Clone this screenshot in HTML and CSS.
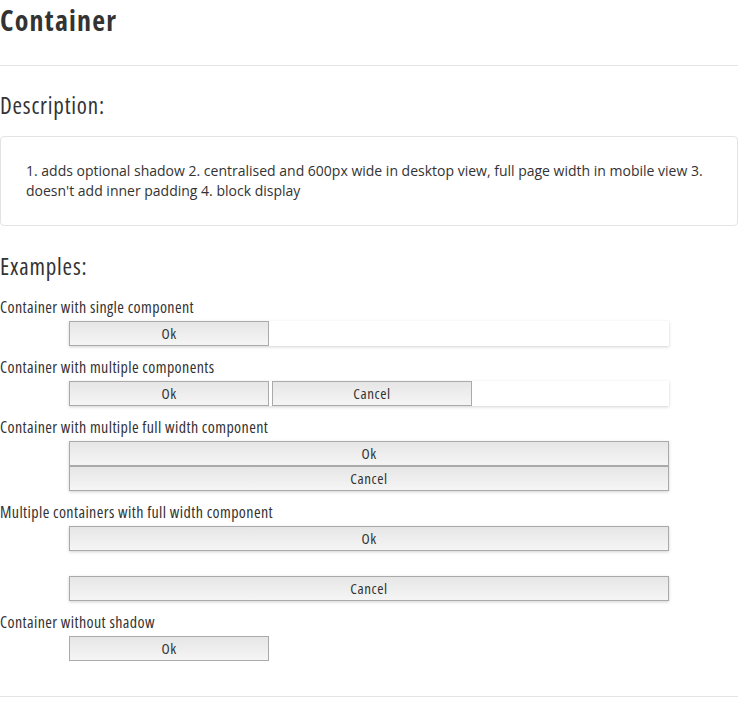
FILE: index.html
```html
<!DOCTYPE html>
<html lang="en">
<head>
<meta charset="utf-8">
<title>Container</title>
<link rel="stylesheet" href="styles.css">
</head>
<body>
<main class="page">
  <header class="page-head">
    <h1 class="page-title">Container</h1>
  </header>

  <section class="section">
    <h2 class="section-title">Description:</h2>
    <div class="desc-box">
      <p class="desc-text">1. adds optional shadow 2. centralised and 600px wide in desktop view, full page width in mobile view 3. doesn't add inner padding 4. block display</p>
    </div>
  </section>

  <section class="section">
    <h2 class="section-title">Examples:</h2>

    <p class="example-label">Container with single component</p>
    <div class="box box-shadow box-inline">
      <button class="btn">Ok</button>
    </div>

    <p class="example-label">Container with multiple components</p>
    <div class="box box-shadow box-inline">
      <button class="btn">Ok</button>
      <button class="btn">Cancel</button>
    </div>

    <p class="example-label">Container with multiple full width component</p>
    <div class="box box-shadow">
      <button class="btn btn-full">Ok</button>
      <button class="btn btn-full">Cancel</button>
    </div>

    <p class="example-label">Multiple containers with full width component</p>
    <div class="box box-shadow">
      <button class="btn btn-full">Ok</button>
    </div>
    <div class="box box-shadow box-spaced">
      <button class="btn btn-full">Cancel</button>
    </div>

    <p class="example-label">Container without shadow</p>
    <div class="box box-inline">
      <button class="btn">Ok</button>
    </div>
  </section>

  <footer class="page-foot"></footer>
</main>
</body>
</html>
```

FILE: styles.css
```css
html, body {
  margin: 0;
  padding: 0;
  background: #ffffff;
}

body {
  font-family: "Open Sans", "Noto Sans", "Liberation Sans", sans-serif;
  color: #333333;
}

.page {
  width: 738px;
}

.page-head {
  padding-bottom: 25px;
  border-bottom: 1px solid #e5e5e5;
}

.page-title {
  margin: 0;
  font-size: 28px;
  line-height: 40px;
  font-weight: 700;
  font-stretch: 75%;
  letter-spacing: 1.2px;
  color: #333333;
}

.section-title {
  margin: 24px 0 16px;
  font-size: 23px;
  line-height: 30px;
  font-weight: 400;
  font-stretch: 75%;
  letter-spacing: 0.8px;
  color: #333333;
}

.desc-box {
  border: 1px solid #e3e3e3;
  border-radius: 4px;
  padding: 24px 25px;
}

.desc-text {
  margin: 0;
  font-size: 14px;
  line-height: 20px;
  color: #333333;
}

.section + .section .section-title {
  margin-top: 25px;
  margin-bottom: 16px;
}

.example-label {
  margin: 0 0 4px;
  font-size: 16px;
  line-height: 20px;
  font-stretch: 75%;
  letter-spacing: 0.4px;
  color: #333333;
}

.box {
  width: 600px;
  margin: 0 auto 11px;
  background: #ffffff;
}

.box-shadow {
  box-shadow: 0 1px 3px rgba(0, 0, 0, 0.18);
}

.box-inline {
  display: flex;
  gap: 3px;
}

.box-spaced {
  margin-top: 25px;
}

.btn {
  box-sizing: border-box;
  width: 200px;
  height: 25px;
  margin: 0;
  padding: 0;
  border: 1px solid #aaaaaa;
  border-radius: 0;
  background: linear-gradient(to bottom, #e6e6e6, #f5f5f5);
  font-family: inherit;
  font-size: 15px;
  font-stretch: 75%;
  letter-spacing: 0.6px;
  line-height: 23px;
  color: #333333;
  text-align: center;
}

.btn-full {
  display: block;
  width: 100%;
}

.page-foot {
  margin-top: 35px;
  border-top: 1px solid #e5e5e5;
}
```
